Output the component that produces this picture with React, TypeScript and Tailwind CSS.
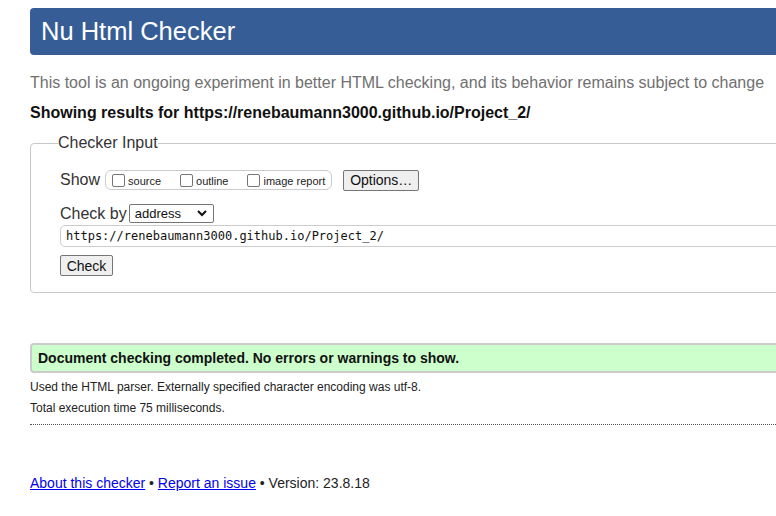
import React from 'react';

const Box: React.FC<{ label: string }> = ({ label }) => (
  <label className="flex items-center">
    <span className="w-[13px] h-[13px] border border-[#767676] rounded-[2px] bg-white mr-[3px]" />
    <span className="text-[11px] leading-none text-[#222] mt-[3px]">{label}</span>
  </label>
);

export default function App() {
  return (
    <div
      className="w-[776px] h-[516px] overflow-hidden bg-white text-[#222]"
      style={{ fontFamily: '"Liberation Sans", Arial, sans-serif' }}
    >
      <div className="w-[820px] pl-[30px] pt-[8px]">
        <h1 className="h-[47px] bg-[#365d95] rounded-l-[4px] text-white text-[25.5px] leading-[47px] pl-[11px]">
          Nu Html Checker
        </h1>

        <p className="mt-[19px] text-[16px] leading-[18px] text-[#707070]">
          This tool is an ongoing experiment in better HTML checking, and its behavior remains subject to change
        </p>
        <p className="mt-[12px] text-[16px] leading-[18px] font-bold text-[#111]">
          Showing results for https://renebaumann3000.github.io/Project_2/
        </p>

        <fieldset className="mt-[12px] border border-[#c8c8c8] rounded-[4px] h-[159px]">
          <legend className="ml-[27px] text-[16px] leading-[18px] text-[#333]">Checker Input</legend>

          <div className="pl-[29px]">
            <div className="flex items-center mt-[17px] h-[22px]">
              <span className="text-[16px] text-[#333] mr-[5px]">Show</span>
              <div className="flex items-center h-[20px] border border-[#ccc] rounded-[6px] pl-[6px] pr-[6px] gap-[19px]">
                <Box label="source" />
                <Box label="outline" />
                <Box label="image report" />
              </div>
              <button className="ml-[11px] h-[21px] w-[76px] border border-[#767676] rounded-[2px] bg-[#efefef] text-[14px] leading-none text-[#111]">
                Options…
              </button>
            </div>

            <div className="flex items-center mt-[13px] h-[19px]">
              <span className="text-[16px] text-[#333] mr-[2px]">Check by</span>
              <div className="relative h-[19px] w-[85px] border border-[#767676] rounded-[2px] bg-white flex items-center pl-[5px] text-[13px] text-[#111]">
                address
                <svg className="absolute right-[6px] top-[5px]" width="10" height="7" viewBox="0 0 10 7">
                  <path d="M1 1 L5 5 L9 1" stroke="#111" strokeWidth="2" fill="none" />
                </svg>
              </div>
            </div>

            <div
              className="mt-[2px] h-[22px] border border-[#ccc] rounded-l-[5px] flex items-center pl-[5px] text-[12px] text-[#111]"
              style={{ fontFamily: '"DejaVu Sans Mono", "Liberation Mono", monospace' }}
            >
              https://renebaumann3000.github.io/Project_2/
            </div>

            <button className="mt-[8px] h-[21px] w-[53px] border border-[#767676] rounded-[2px] bg-[#efefef] text-[14px] leading-none text-[#111]">
              Check
            </button>
          </div>
        </fieldset>

        <div className="mt-[50px] h-[30px] bg-[#ccffcc] border-y-2 border-l-2 border-[#cccccc] rounded-l-[4px] flex items-center pl-[6px] text-[14px] font-bold text-[#111]">
          Document checking completed. No errors or warnings to show.
        </div>

        <p className="mt-[7px] text-[12px] leading-[14px] text-[#222]">
          Used the HTML parser. Externally specified character encoding was utf-8.
        </p>
        <p className="mt-[7px] text-[12px] leading-[14px] text-[#222]">Total execution time 75 milliseconds.</p>
        <div className="mt-[9px] border-t border-dotted border-[#555]" />

        <p className="mt-[50px] text-[14px] leading-[16px] text-[#222]">
          <a className="text-[#0000ee] underline" href="#">About this checker</a>
          {' • '}
          <a className="text-[#0000ee] underline" href="#">Report an issue</a>
          {' • Version: 23.8.18'}
        </p>
      </div>
    </div>
  );
}
